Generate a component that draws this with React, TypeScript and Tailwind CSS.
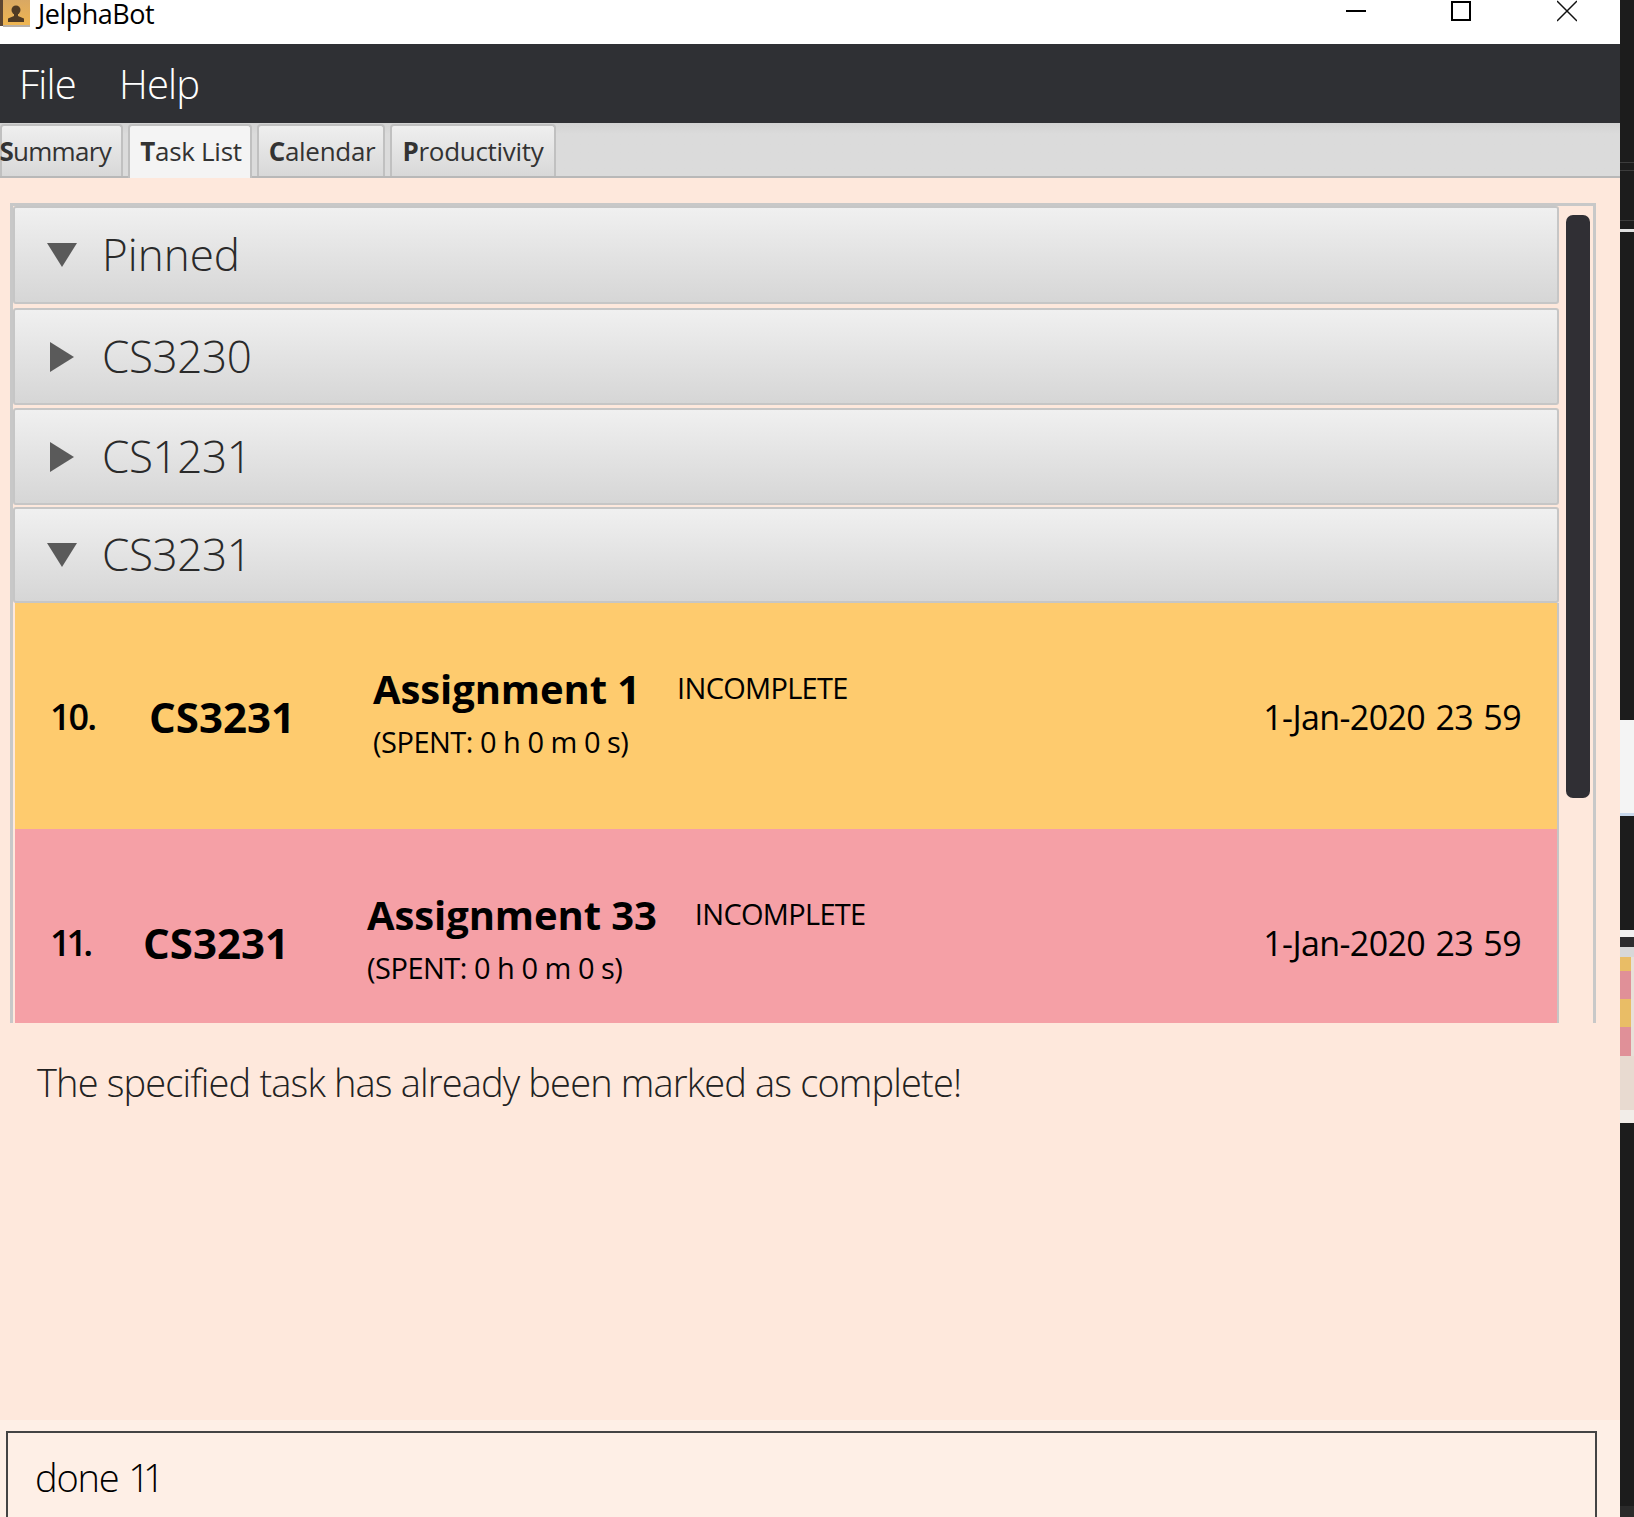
import React from "react";

const FONT = "font-['Open_Sans','Noto_Sans',sans-serif]";

type Task = {
  index: string;
  title: string;
  bg: string;
  numClass: string;
  gap: string;
};

const tasks: Task[] = [
  { index: "10.", title: "Assignment 1", bg: "bg-[#fecb6e]", numClass: "w-[99px] tracking-[-2px]", gap: "gap-[37px]" },
  { index: "11.", title: "Assignment 33", bg: "bg-[#f5a0a6]", numClass: "w-[93px] tracking-[-4px]", gap: "gap-[38px]" },
];

function AppIcon() {
  return (
    <svg width="30" height="27" viewBox="0 0 30 27" className="shrink-0">
      <defs>
        <linearGradient id="book" x1="0" y1="0" x2="0" y2="1">
          <stop offset="0" stopColor="#d9a863" />
          <stop offset="1" stopColor="#f0b650" />
        </linearGradient>
      </defs>
      <rect x="0" y="0" width="3" height="26" fill="#5d4632" />
      <rect x="3" y="0" width="27" height="26" fill="url(#book)" />
      <rect x="3" y="25" width="27" height="2" fill="#b9b0a6" />
      <circle cx="16" cy="10" r="4.500" fill="#4f3a24" />
      <path d="M14 13h4v3l6 2.500V22H8v-3.500l6-2.500z" fill="#4f3a24" />
    </svg>
  );
}

function Triangle({ open }: { open: boolean }) {
  return open ? (
    <svg width="30" height="24" viewBox="0 0 30 24" className="ml-[2px] shrink-0">
      <path d="M0 0h30L15 24z" fill="#5a5a5a" />
    </svg>
  ) : (
    <svg width="24" height="30" viewBox="0 0 24 30" className="mr-[1px] ml-[5px] shrink-0">
      <path d="M0 0v30l24-15z" fill="#5a5a5a" />
    </svg>
  );
}

function Header({ label, open, className, labelClass }: { label: string; open: boolean; className: string; labelClass: string }) {
  return (
    <div
      className={`flex shrink-0 items-center rounded-[3px] border-2 border-[#c6c6c6] bg-gradient-to-b from-[#f0f0f0] to-[#d6d6d6] pl-[30px] ${className}`}
    >
      <Triangle open={open} />
      <span className={`mt-[-2px] text-[44px] leading-none font-light text-[#2a2a2a] ${labelClass}`}>{label}</span>
    </div>
  );
}

function TaskRow({ task }: { task: Task }) {
  return (
    <div className={`ml-[2px] flex h-[226px] shrink-0 items-center pr-[36px] pl-[35px] text-black ${task.bg}`}>
      <div className={`mt-[2px] text-[36px] font-semibold ${task.numClass}`}>{task.index}</div>
      <div className="w-[224px] text-[42px] font-bold">CS3231</div>
      <div className="flex flex-1 flex-col">
        <div className={`flex items-start ${task.gap}`}>
          <span className="mt-[-9px] text-[40px] leading-[60px] font-bold tracking-[-0.1px]">{task.title}</span>
          <span className="mt-[-6px] text-[29px] leading-[52px] font-normal tracking-[-0.7px]">INCOMPLETE</span>
        </div>
        <div className="mt-[1px] text-[29px] leading-[44px] tracking-[-0.5px]">(SPENT: 0 h 0 m 0 s)</div>
      </div>
      <div className="mt-[2px] text-[34px] tracking-[-0.6px] [word-spacing:2px]">1-Jan-2020 23 59</div>
    </div>
  );
}

function DesktopStrip() {
  return (
    <div className="flex w-[14px] shrink-0 flex-col bg-[#1c1c1c]">
      <div className="h-[162px]" />
      <div className="h-[1px] bg-[#3c3c3c]" />
      <div className="h-[7px]" />
      <div className="h-[1px] bg-[#3c3c3c]" />
      <div className="h-[49px]" />
      <div className="h-[1px] bg-[#3c3c3c]" />
      <div className="h-[8px]" />
      <div className="h-[3px] bg-[#e0e0e0]" />
      <div className="h-[488px]" />
      <div className="h-[93px] bg-[#f4f4f4]" />
      <div className="h-[3px] bg-[#c8d8ec]" />
      <div className="h-[114px]" />
      <div className="h-[7px] bg-[#f0f0f0]" />
      <div className="h-[10px] bg-[#2c2c2e]" />
      <div className="h-[10px] bg-[#d8d8d8]" />
      <div className="h-[14px] border-r-[3px] border-[#e8e0d8] bg-[#e9bd66]" />
      <div className="h-[28px] border-r-[3px] border-[#e8e0d8] bg-[#e09098]" />
      <div className="h-[28px] border-r-[3px] border-[#e8e0d8] bg-[#e9bd66]" />
      <div className="h-[29px] border-r-[3px] border-[#e8e0d8] bg-[#e09098]" />
      <div className="h-[54px] bg-[#e8dad0]" />
      <div className="h-[13px] bg-[#f2ede8]" />
      <div className="flex-1" />
      <div className="h-[11px] bg-[#2a2a2a]" />
    </div>
  );
}

export default function App() {
  return (
    <div className={`flex h-[1517px] w-[1634px] overflow-hidden ${FONT}`}>
      <div className="flex w-[1620px] shrink-0 flex-col bg-[#fee8dc]">
        {/* title bar */}
        <div className="flex h-[44px] shrink-0 items-start bg-white">
          <AppIcon />
          <span className="ml-[8px] text-[27px] leading-[27px] tracking-[-0.5px] text-black">JelphaBot</span>
          <div className="flex-1" />
          <svg width="20" height="22" viewBox="0 0 20 22" className="mr-[85px] shrink-0">
            <path d="M0 11h20" stroke="#000" strokeWidth="2" />
          </svg>
          <svg width="20" height="22" viewBox="0 0 20 22" className="mr-[86px] shrink-0">
            <rect x="1" y="2" width="18" height="18" fill="none" stroke="#000" strokeWidth="2" />
          </svg>
          <svg width="20" height="22" viewBox="0 0 20 22" className="mr-[43px] shrink-0">
            <path d="M0 1l20 20M20 1L0 21" stroke="#111" strokeWidth="1.500" />
          </svg>
        </div>

        {/* menu bar */}
        <div className="flex h-[79px] shrink-0 items-center gap-[43px] bg-[#2f3034] pl-[19px] text-[40px] font-light tracking-[-0.8px] text-white">
          <span>File</span>
          <span>Help</span>
        </div>

        {/* tabs */}
        <div className="flex h-[55px] shrink-0 items-end gap-[5px] overflow-hidden bg-[#dbdbdb] bg-gradient-to-b from-[#d2d2d2] to-[#dbdbdb] to-20% pt-[1px] text-[26px] tracking-[-0.3px] text-[#333] shadow-[inset_0_-2px_0_#b8b8b8]">
          <div className="mb-[2px] flex h-[52px] w-[123px] shrink-0 items-center justify-end rounded-t-[4px] border-2 border-b-0 border-[#c0c0c0] bg-gradient-to-b from-[#efefef] to-[#d8d8d8] pr-[10px]">
            <span className="tracking-[-0.7px]"><b>S</b>ummary</span>
          </div>
          <div className="flex h-[54px] w-[124px] shrink-0 items-center justify-center rounded-t-[4px] border-2 border-b-0 border-[#c0c0c0] bg-[#f4f4f4] pb-[2px]">
            <span className="ml-[2px]"><b>T</b>ask List</span>
          </div>
          <div className="mb-[2px] flex h-[52px] w-[128px] shrink-0 items-center justify-center rounded-t-[4px] border-2 border-b-0 border-[#c0c0c0] bg-gradient-to-b from-[#efefef] to-[#d8d8d8]">
            <span className="ml-[2px]"><b>C</b>alendar</span>
          </div>
          <div className="mb-[2px] flex h-[52px] w-[166px] shrink-0 items-center justify-center rounded-t-[4px] border-2 border-b-0 border-[#c0c0c0] bg-gradient-to-b from-[#efefef] to-[#d8d8d8]">
            <span><b>P</b>roductivity</span>
          </div>
        </div>

        {/* task list */}
        <div className="mt-[25px] ml-[10px] flex h-[820px] w-[1586px] shrink-0 overflow-hidden border-x-[3px] border-t-[3px] border-[#c8c8c8]">
          <div className="flex w-[1546px] shrink-0 flex-col">
            <Header label="Pinned" open className="h-[98px]" labelClass="ml-[25px]" />
            <Header label="CS3230" open={false} className="mt-[4px] h-[97px]" labelClass="ml-[27px] tracking-[-0.4px]" />
            <Header label="CS1231" open={false} className="mt-[3px] h-[97px]" labelClass="ml-[27px] tracking-[-0.4px]" />
            <Header label="CS3231" open className="mt-[2px] h-[96px]" labelClass="ml-[25px] tracking-[-0.4px]" />
            <div className="flex flex-col border-r-2 border-[#c6c6c6]">
              {tasks.map((t) => (
                <TaskRow key={t.index} task={t} />
              ))}
            </div>
          </div>
          <div className="mt-[9px] ml-[7px] h-[583px] w-[24px] rounded-[7px] bg-[#302f34]" />
        </div>

        {/* result message */}
        <div className="h-[397px] shrink-0 pt-[33px] pl-[37px] text-[38px] leading-[52px] font-light tracking-[-0.85px] text-[#222]">
          The specified task has already been marked as complete!
        </div>

        {/* command box */}
        <div className="flex-1 bg-[#feefe6] pt-[11px] pl-[6px]">
          <div className="h-[100px] w-[1591px] border-2 border-[#444] pt-[18px] pl-[27px] text-[38px] leading-[52px] font-light text-black">
            <span className="tracking-[-1.2px]">done</span> <span className="tracking-[-7px]">11</span>
          </div>
        </div>
      </div>
      <DesktopStrip />
    </div>
  );
}
